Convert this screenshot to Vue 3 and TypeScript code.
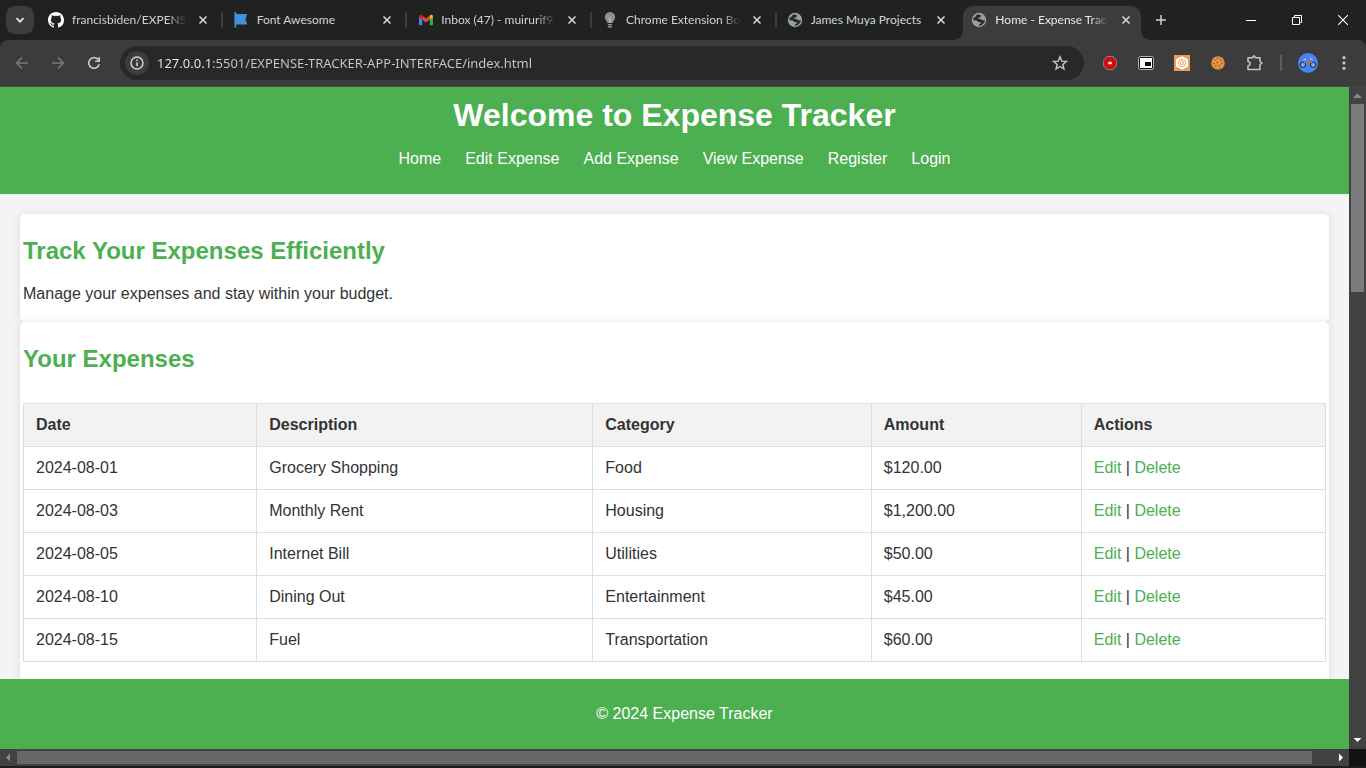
<script setup lang="ts">
import { ref } from 'vue'

interface Tab {
  icon: 'github' | 'flag' | 'gmail' | 'bulb' | 'globe'
  title: string
  faded?: boolean
  active?: boolean
}

interface Expense {
  date: string
  description: string
  category: string
  amount: string
}

const tabs: Tab[] = [
  { icon: 'github', title: 'francisbiden/EXPENSE', faded: true },
  { icon: 'flag', title: 'Font Awesome' },
  { icon: 'gmail', title: 'Inbox (47) - muirurif9', faded: true },
  { icon: 'bulb', title: 'Chrome Extension Bo', faded: true },
  { icon: 'globe', title: 'James Muya Projects' },
  { icon: 'globe', title: 'Home - Expense Trac', faded: true, active: true },
]

const address = ref('127.0.0.1:5501/EXPENSE-TRACKER-APP-INTERFACE/index.html')

const links = ['Home', 'Edit Expense', 'Add Expense', 'View Expense', 'Register', 'Login']

const columns = ['Date', 'Description', 'Category', 'Amount', 'Actions']

const expenses: Expense[] = [
  { date: '2024-08-01', description: 'Grocery Shopping', category: 'Food', amount: '$120.00' },
  { date: '2024-08-03', description: 'Monthly Rent', category: 'Housing', amount: '$1,200.00' },
  { date: '2024-08-05', description: 'Internet Bill', category: 'Utilities', amount: '$50.00' },
  { date: '2024-08-10', description: 'Dining Out', category: 'Entertainment', amount: '$45.00' },
  { date: '2024-08-15', description: 'Fuel', category: 'Transportation', amount: '$60.00' },
]
</script>

<template>
  <div class="browser">
    <div class="tab-strip">
      <button class="tab-search" aria-label="Search tabs">
        <svg width="12" height="12" viewBox="0 0 12 12"><path d="M2.500 4.200 6 7.700 9.500 4.200" fill="none" stroke="#e3e3e3" stroke-width="1.800" /></svg>
      </button>
      <div class="tabs">
        <div v-for="tab in tabs" :key="tab.title" class="tab" :class="{ active: tab.active }">
          <svg v-if="tab.icon === 'github'" class="favicon" viewBox="0 0 16 16">
            <path fill="#fff" d="M8 0C3.58 0 0 3.58 0 8c0 3.54 2.29 6.53 5.47 7.59.4.07.55-.17.55-.38 0-.19-.01-.82-.01-1.49-2.01.37-2.53-.49-2.69-.94-.09-.23-.48-.94-.82-1.13-.28-.15-.68-.52-.01-.53.63-.01 1.08.58 1.23.82.72 1.21 1.87.87 2.33.66.07-.52.28-.87.51-1.07-1.78-.2-3.64-.89-3.64-3.95 0-.87.31-1.59.82-2.15-.08-.2-.36-1.02.08-2.12 0 0 .67-.21 2.2.82.64-.18 1.32-.27 2-.27s1.36.09 2 .27c1.53-1.04 2.2-.82 2.2-.82.44 1.1.16 1.92.08 2.12.51.56.82 1.27.82 2.15 0 3.07-1.87 3.75-3.65 3.95.29.25.54.73.54 1.48 0 1.07-.01 1.93-.01 2.2 0 .21.15.46.55.38A8.01 8.01 0 0 0 16 8c0-4.42-3.58-8-8-8Z" />
          </svg>
          <svg v-else-if="tab.icon === 'flag'" class="favicon" viewBox="0 0 16 16">
            <path fill="#4390e1" d="M1.300 1.200a1.100 1.100 0 0 1 2.200 0V2H14.200l-1.700 5.200 1.700 5.300H3.300v3H1.500z" />
          </svg>
          <svg v-else-if="tab.icon === 'gmail'" class="favicon" viewBox="0 0 16 16">
            <path fill="#4285f4" d="M2 4.200 5.200 6.600v6.600H3a1 1 0 0 1-1-1z" />
            <path fill="#34a853" d="M16 4.200 12.800 6.600v6.600H15a1 1 0 0 0 1-1z" />
            <path fill="#ea4335" d="M5.200 3.600 9 6.500l3.800-2.900v4L9 10.400 5.200 7.600z" />
            <path fill="#c5221f" d="M2 4.200c0-1.400 1.600-2 2.600-1.200l.6.5v4.100L2 5.200z" />
            <path fill="#fbbc04" d="M16 4.200c0-1.400-1.600-2-2.600-1.200l-.6.5v4.100L16 5.200z" />
          </svg>
          <svg v-else-if="tab.icon === 'bulb'" class="favicon" viewBox="0 0 16 16">
            <path fill="#8f8f8f" d="M8 0a5.200 5.200 0 0 0-5.200 5.200C2.800 7.600 5 8.700 5.400 11h5.200c.4-2.300 2.600-3.400 2.600-5.800A5.200 5.200 0 0 0 8 0z" />
            <path fill="none" stroke="#c4c4c4" d="m6.200 5 1.200 1v4.500M9.800 5 8.600 6v4.500" stroke-width=".7" />
            <path fill="#8f8f8f" d="M5.800 12h4.400v1H5.800zM5.800 13.700h4.400v.7L9 15.800H7l-1.200-1.400z" />
          </svg>
          <svg v-else class="favicon" viewBox="0 0 16 16">
            <circle cx="8" cy="8" r="7.200" fill="#9aa0a6" />
            <path class="land" d="M7.300 2.200 10 3.200 9.600 5.200 7.800 5.600 7.500 7H9.700c.9 0 1 .9 1.700 1.200 1 .4 1.600-.4 2.500-.2-.1 2.300-1.700 4.600-4 5.500L7.700 14v-1.300L10 11.600 9.200 10H7.200L5.600 8.500 2.200 8.300A6 6 0 0 1 3 5.300L5 4.600 5.300 3.200z" fill-rule="evenodd" />
          </svg>
          <span class="tab-title" :class="{ faded: tab.faded }">{{ tab.title }}</span>
          <button class="tab-close" :aria-label="'Close ' + tab.title">
            <svg width="10" height="10" viewBox="0 0 10 10"><path d="M1.500 1.500l7 7M8.500 1.500l-7 7" stroke="#dadada" stroke-width="1.500" /></svg>
          </button>
        </div>
      </div>
      <button class="new-tab" aria-label="New tab">
        <svg width="12" height="12" viewBox="0 0 12 12"><path d="M6 1v10M1 6h10" stroke="#d0d0d0" stroke-width="1.500" /></svg>
      </button>
      <div class="window-controls">
        <button aria-label="Minimize"><svg width="10" height="10" viewBox="0 0 10 10"><path d="M0 5.500h10" stroke="#fff" /></svg></button>
        <button aria-label="Restore"><svg width="10" height="10" viewBox="0 0 10 10"><path d="M.5 2.500h7v7h-7zM2.500 2.500v-2h7v7h-2" fill="none" stroke="#fff" /></svg></button>
        <button aria-label="Close window"><svg width="10" height="10" viewBox="0 0 10 10"><path d="m0 0 10 10M10 0 0 10" stroke="#fff" stroke-width="1.100" /></svg></button>
      </div>
    </div>

    <div class="toolbar">
      <button class="tool" aria-label="Back">
        <svg width="16" height="16" viewBox="0 0 16 16"><path d="M14 8H3M8 2.500 2.500 8 8 13.500" fill="none" stroke="#7b7b7b" stroke-width="1.500" /></svg>
      </button>
      <button class="tool" aria-label="Forward">
        <svg width="16" height="16" viewBox="0 0 16 16"><path d="M2 8h11M8 2.500 13.500 8 8 13.500" fill="none" stroke="#7b7b7b" stroke-width="1.500" /></svg>
      </button>
      <button class="tool" aria-label="Reload">
        <svg width="16" height="16" viewBox="0 0 16 16"><path d="M13.200 9.200A5.300 5.300 0 1 1 12 4.400L13.400 6" fill="none" stroke="#c7c7c7" stroke-width="1.700" /><path d="M14 2v5H9V5.500h3.500V2z" fill="#c7c7c7" /></svg>
      </button>
      <div class="omnibox">
        <button class="site-info" aria-label="Site information">
          <svg width="14" height="14" viewBox="0 0 14 14"><circle cx="7" cy="7" r="6" fill="none" stroke="#d5d5d5" stroke-width="1.400" /><path d="M7 6.200v4M7 3.500V5" stroke="#d5d5d5" stroke-width="1.500" /></svg>
        </button>
        <input v-model="address" class="address" type="text" aria-label="Address" spellcheck="false" />
        <button class="bookmark" aria-label="Bookmark this page">
          <svg width="16" height="16" viewBox="0 0 16 16"><path d="m8 1.800 1.750 4.300 4.650.35-3.550 3L11.950 14 8 11.500 4.050 14l1.100-4.550-3.550-3 4.650-.35z" fill="none" stroke="#c7c7c7" stroke-width="1.400" /></svg>
        </button>
      </div>
      <button class="tool" aria-label="Ad blocker">
        <svg width="16" height="16" viewBox="0 0 16 16"><path d="M5.200 1h5.600L15 5.200v5.600L10.800 15H5.200L1 10.800V5.200z" fill="#8f9292" /><path d="M5.500 1.700h5l3.800 3.800v5l-3.800 3.800h-5l-3.800-3.800v-5z" fill="#cf0c10" /><rect x="6" y="6.800" width="4" height="2.400" rx="1" fill="#f3d9d9" /></svg>
      </button>
      <button class="tool" aria-label="Picture in picture">
        <svg width="16" height="16" viewBox="0 0 16 16"><rect x=".5" y="1.500" width="15" height="13" rx="2" fill="#111" stroke="#b5b5b5" /><rect x="2" y="3" width="12" height="10" fill="#fff" /><rect x="7" y="7" width="6" height="4" fill="#111" /></svg>
      </button>
      <button class="tool" aria-label="Extension">
        <svg width="16" height="16" viewBox="0 0 16 16"><path fill="#ee9c55" d="M0 0h16v16H0z" /><path fill="#fff" d="m8 1.200 6 3.400v6.800l-6 3.400-6-3.400V4.600z" /><circle cx="8" cy="8" r="3.600" fill="none" stroke="#eda25c" /><circle cx="8" cy="8" r="1.500" fill="none" stroke="#eda25c" /></svg>
      </button>
      <button class="tool" aria-label="Cookie editor">
        <svg width="16" height="16" viewBox="0 0 16 16"><circle cx="8" cy="8" r="6.800" fill="#df9040" /><path d="M4 5h1.500M7 3.500h1M10 5h1.500M3 8.500h1.500M6.500 7.500H8M11 8.500h1.500M5 11.500h1.500M8.500 10.500H10M9 13h1" stroke="#a3561c" stroke-width="1.200" /><path d="M5 3.500h1M8.500 5.500h1M4.500 7h1M9 8.500h1M7 12.500h1M11.500 11h1" stroke="#f6c07c" stroke-width="1.200" /></svg>
      </button>
      <button class="tool" aria-label="Extensions">
        <svg width="18" height="18" viewBox="0 0 18 18"><path d="M3 3.700h4.500l1.500-2 1.500 2H15v3.800l2 1.500-2 1.500v5H3v-3.700c2.900-.6 2.900-3.800 0-4.400z" fill="none" stroke="#c7c7c7" stroke-width="1.500" stroke-linejoin="round" /></svg>
      </button>
      <span class="divider"></span>
      <button class="tool" aria-label="Profile">
        <svg width="20" height="20" viewBox="0 0 20 20"><circle cx="10" cy="10" r="10" fill="#4285f4" /><circle cx="5" cy="11.800" r="2.500" fill="#8fb8f2" stroke="#24344f" stroke-width="1.100" /><circle cx="15" cy="11.800" r="2.500" fill="#8fb8f2" stroke="#24344f" stroke-width="1.100" /><path d="M5 11.800 7.500 8l2.500 4 3-4 2 3.800M7.500 8.500H13" fill="none" stroke="#c96a4d" /><path d="M5.500 6.500H8M12 6h2.500" stroke="#e8d6cd" /></svg>
      </button>
      <button class="tool" aria-label="Menu">
        <svg width="16" height="16" viewBox="0 0 16 16" fill="#c7c7c7"><circle cx="8" cy="2.700" r="1.600" /><circle cx="8" cy="8" r="1.600" /><circle cx="8" cy="13.300" r="1.600" /></svg>
      </button>
    </div>

    <div class="viewport">
      <div class="page">
        <div class="content">
          <header class="site-header">
            <h1>Welcome to Expense Tracker</h1>
            <nav>
              <ul>
                <li v-for="link in links" :key="link"><a href="#">{{ link }}</a></li>
              </ul>
            </nav>
          </header>
          <main>
            <section class="card">
              <h2>Track Your Expenses Efficiently</h2>
              <p>Manage your expenses and stay within your budget.</p>
            </section>
            <section class="card list">
              <h2>Your Expenses</h2>
              <table>
                <thead>
                  <tr><th v-for="column in columns" :key="column" scope="col">{{ column }}</th></tr>
                </thead>
                <tbody>
                  <tr v-for="expense in expenses" :key="expense.date">
                    <td>{{ expense.date }}</td>
                    <td>{{ expense.description }}</td>
                    <td>{{ expense.category }}</td>
                    <td>{{ expense.amount }}</td>
                    <td><a href="#">Edit</a> | <a href="#">Delete</a></td>
                  </tr>
                </tbody>
              </table>
            </section>
          </main>
        </div>
        <footer class="site-footer"><p>© 2024 Expense Tracker</p></footer>
      </div>
      <div class="scrollbar vertical">
        <svg class="arrow" viewBox="0 0 17 17"><path d="M8.500 6.500 13 11H4z" fill="#8a8a8a" /></svg>
        <div class="track"><div class="thumb"></div></div>
        <svg class="arrow" viewBox="0 0 17 17"><path d="M4.500 6h8l-4 4z" fill="#fff" /></svg>
      </div>
      <div class="scrollbar horizontal">
        <svg class="arrow" viewBox="0 0 17 17"><path d="M10 4.500v8L6 8.500z" fill="#8a8a8a" /></svg>
        <div class="track"><div class="thumb"></div></div>
        <svg class="arrow" viewBox="0 0 17 17"><path d="M7 4.500v8l4-4z" fill="#fff" /></svg>
      </div>
      <div class="corner"></div>
    </div>
  </div>
</template>

<style>
body {
  margin: 0;
  background: #202221;
}
</style>

<style scoped>
.browser {
  display: flex;
  flex-direction: column;
  height: 100vh;
  overflow: hidden;
  box-sizing: border-box;
  border-bottom: 2px solid #1d1d1d;
  background: #202221;
  font-family: "Liberation Sans", Arial, sans-serif;
}

button {
  display: flex;
  align-items: center;
  justify-content: center;
  flex: none;
  padding: 0;
  border: 0;
  background: none;
}

.tab-strip {
  display: flex;
  flex: none;
  height: 40px;
}

.tab-search {
  width: 28px;
  height: 28px;
  margin: 6px 4px 6px 6px;
  border-radius: 9px;
  background: #3c3c3c;
}

.tabs {
  display: flex;
  flex: 0 1 1108px;
  min-width: 0;
}

.tab {
  position: relative;
  display: flex;
  align-items: center;
  flex: 1 1 0;
  min-width: 0;
  box-sizing: border-box;
  padding: 0 12px 0 10px;
  color: #d2d2d2;
}

.tab::after {
  content: "";
  position: absolute;
  right: 0;
  top: 12px;
  width: 2px;
  height: 16px;
  background: #3c3c3c;
}

.tab:nth-child(5)::after {
  display: none;
}

.tab.active {
  color: #e8e8e8;
}

.tab.active::before {
  content: "";
  position: absolute;
  inset: 6px 5px 0 2px;
  border-radius: 10px 10px 0 0;
  background: #3c3c3c;
}

.tab.active::after {
  left: -8px;
  right: -5px;
  top: 30px;
  width: auto;
  height: 10px;
  background:
    radial-gradient(circle at 0 0, transparent 10px, #3c3c3c 10px) left / 10px 10px no-repeat,
    radial-gradient(circle at 100% 0, transparent 10px, #3c3c3c 10px) right / 10px 10px no-repeat;
}

.tab > * {
  position: relative;
  z-index: 1;
}

.favicon {
  flex: none;
  width: 16px;
  height: 16px;
  margin-right: 8px;
}

.land {
  fill: #2b2d2d;
}

.tab-title {
  flex: 1;
  min-width: 0;
  overflow: hidden;
  white-space: nowrap;
  font: 12px/20px Lato, "Noto Sans", sans-serif;
}

.tab-title.faded {
  mask-image: linear-gradient(to right, #000 calc(100% - 20px), transparent);
}

.tab-close {
  width: 16px;
  height: 16px;
  margin-left: 8px;
}

.new-tab {
  width: 28px;
  height: 28px;
  margin: 6px 0 6px 1px;
}

.window-controls {
  display: flex;
  margin-left: auto;
}

.window-controls button {
  width: 46px;
  height: 40px;
}

.toolbar {
  display: flex;
  align-items: center;
  flex: none;
  height: 47px;
  box-sizing: border-box;
  padding: 0 4px;
  border-bottom: 1px solid #484848;
  border-radius: 8px 8px 0 0;
  background: #3c3c3c;
}

.tool {
  width: 36px;
  height: 34px;
}

.omnibox {
  display: flex;
  align-items: center;
  flex: 1;
  min-width: 0;
  height: 34px;
  box-sizing: border-box;
  margin: 0 8px;
  padding: 0 10px 0 5px;
  border-radius: 17px;
  background: #282828;
}

.site-info {
  width: 24px;
  height: 24px;
  border-radius: 50%;
  background: #3c3c3c;
}

.address {
  flex: 1;
  min-width: 0;
  height: 24px;
  margin-left: 8px;
  padding: 0;
  border: 0;
  outline: 0;
  background: linear-gradient(to right, #f0f0f0 54px, #c9c9c9 54px);
  background-clip: text;
  color: transparent;
  font: 13px/20px "Noto Sans", "Open Sans", sans-serif;
}

.bookmark {
  width: 28px;
  height: 28px;
}

.divider {
  width: 2px;
  height: 16px;
  margin: 0 8px;
  background: #5c5c5c;
}

.viewport {
  display: grid;
  grid-template: minmax(0, 1fr) 17px / minmax(0, 1fr) 17px;
  flex: 1;
  min-height: 0;
}

.page {
  display: flex;
  flex-direction: column;
  min-height: 0;
  background: #f4f4f4;
  color: #333;
  font-size: 16px;
  line-height: 18px;
}

.content {
  flex: 1;
  display: flex;
  flex-direction: column;
  min-height: 0;
  overflow: hidden;
}

a {
  color: #4caf50;
  text-decoration: none;
}

.site-header {
  flex: none;
  padding: 10px;
  background: #4caf50;
  color: #fff;
  text-align: center;
}

h1 {
  margin: 0;
  font-size: 32px;
  line-height: 37px;
}

.site-header ul {
  display: flex;
  justify-content: center;
  gap: 24px;
  margin: 16px 0;
  padding: 0;
  list-style: none;
}

.site-header a {
  color: #fff;
}

main {
  flex: 1;
  display: flex;
  flex-direction: column;
  padding: 20px 20px 0;
}

.card {
  padding: 3px;
  border-radius: 5px;
  background: #fff;
  box-shadow: 0 0 10px rgba(0, 0, 0, 0.1);
}

.card.list {
  flex: 1 0 auto;
  padding-bottom: 40px;
}

h2 {
  margin: 20px 0;
  color: #4caf50;
  font-size: 24px;
  line-height: 28px;
}

.card p {
  margin: 16px 0;
}

table {
  width: 100%;
  margin-top: 30px;
  border-collapse: collapse;
}

th,
td {
  padding: 12px;
  border: 1px solid #ddd;
  text-align: left;
}

th {
  background: #f2f2f2;
}

.site-footer {
  flex: none;
  padding: 10px 0 10px 20px;
  background: #4caf50;
  color: #fff;
  text-align: center;
}

.site-footer p {
  margin: 16px 0;
}

.scrollbar {
  display: flex;
  background: #424242;
}

.vertical {
  flex-direction: column;
}

.arrow {
  flex: none;
  width: 17px;
  height: 17px;
}

.track {
  flex: 1;
}

.vertical .thumb {
  height: 30%;
  margin: 0 2px;
  background: #7b7b7b;
}

.horizontal .thumb {
  width: 98.5%;
  height: 13px;
  margin: 2px 0;
  background: #686868;
}

.corner {
  background: #121212;
}
</style>
